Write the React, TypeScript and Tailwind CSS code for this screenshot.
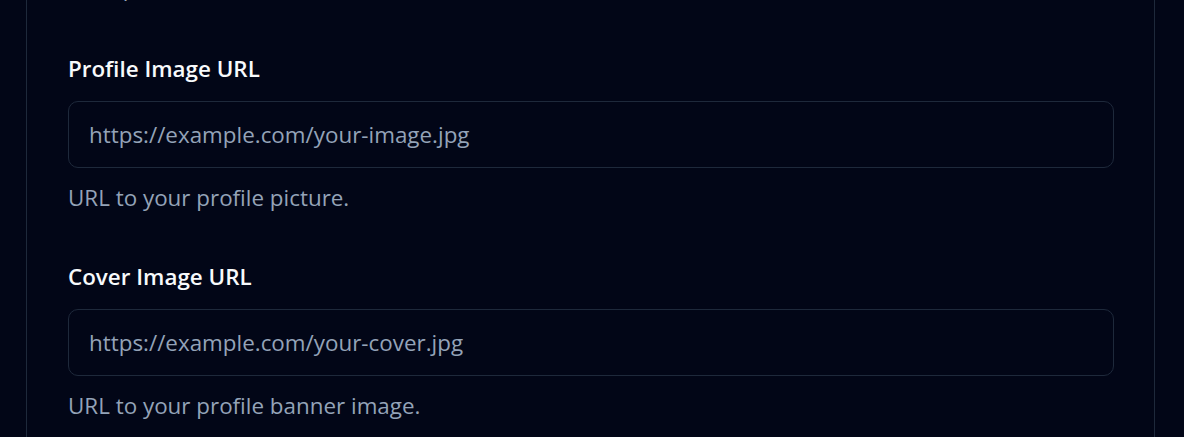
const fields = [
  {
    id: 'profileImage',
    label: 'Profile Image URL',
    placeholder: 'https://example.com/your-image.jpg',
    hint: 'URL to your profile picture.',
  },
  {
    id: 'coverImage',
    label: 'Cover Image URL',
    placeholder: 'https://example.com/your-cover.jpg',
    hint: 'URL to your profile banner image.',
  },
];

const App = () => {
  return (
    <div className="min-h-screen overflow-hidden bg-[#020617] pl-[26px] pr-[29px] font-['Open_Sans',sans-serif]">
      <div className="min-h-[437px] border-x border-[#1e293b] pl-[41px] pr-[40px] pt-px">
        {/* tail of the previous field, scrolled off the top */}
        <p className="-mt-[31px] h-[35px] text-[22.4px] leading-[35px] text-[#94a3b8]">
          Your public handle.
        </p>

        {fields.map((field, i) => (
          <div key={field.id} className={i === 0 ? 'mt-[46px]' : 'mt-[44px]'}>
            <label
              htmlFor={field.id}
              className="block h-[35px] text-[22.4px] leading-[35px] font-semibold text-[#f8fafc]"
            >
              {field.label}
            </label>
            <input
              id={field.id}
              type="url"
              placeholder={field.placeholder}
              className="mt-[15px] block h-[67px] w-full rounded-[10px] border border-[#1e293b] bg-transparent px-5 text-[22.4px] text-[#f8fafc] outline-none placeholder:text-[#94a3b8]"
            />
            <p className="mt-[12px] h-[35px] text-[22.4px] leading-[35px] text-[#94a3b8]">
              {field.hint}
            </p>
          </div>
        ))}
      </div>
    </div>
  );
};

export default App;
